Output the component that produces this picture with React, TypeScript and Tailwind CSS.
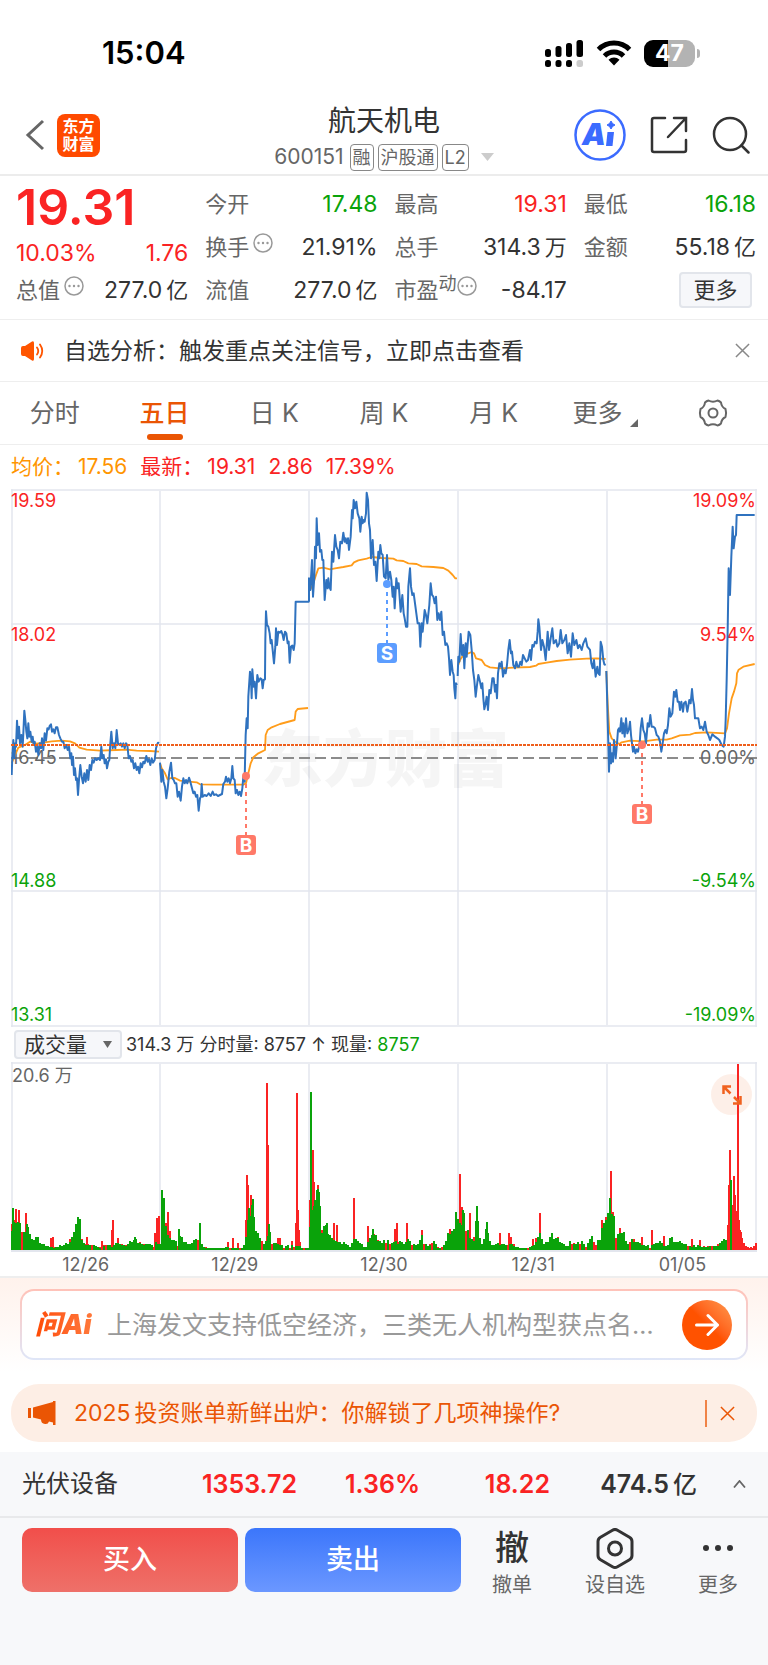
import React, { useState } from 'react';

const periods = ['分时', '五日', '日 K', '周 K', '月 K', '更多'];

// Intraday curves, one entry per trading day. Points are stored at three units per pixel,
// dx is the pixel offset of the day's origin inside the chart.
const days = [
  {
    dx: -11,
    price:
      '35,885 37,830 40,780 43,835 46,790 48,800 51,722 54,775 57,740 60,790 64,765 68,800 70,760 73,692 76,720 79,755 82,775 85,730 88,770 91,755 95,785 98,770 101,795 104,785 108,815 112,800 115,825 119,790 123,805 126,775 130,810 134,760 138,782 142,745 146,748 149,738 153,733 156,755 160,748 164,760 168,742 172,742 177,765 181,775 186,785 190,785 194,805 199,795 203,810 207,800 211,835 214,820 216,855 219,830 222,885 225,865 228,900 231,895 234,945 237,900 241,855 245,890 249,910 253,880 257,905 261,870 265,900 269,855 273,870 277,840 281,848 285,835 290,840 295,835 300,840 304,800 307,835 311,825 314,850 318,838 321,865 325,845 328,840 331,790 334,755 338,805 342,790 346,805 350,750 354,790 358,795 362,790 366,800 370,790 374,805 378,790 382,795 386,835 390,828 394,845 398,840 402,865 406,850 410,870 414,860 418,880 422,850 426,862 430,845 434,850 439,828 443,845 447,838 451,855 455,835 459,848 464,840 468,805 471,795 474,788 477,790',
    average:
      '35,850 45,825 55,803 75,795 90,785 110,791 130,788 155,784 185,782 210,784 225,790 238,803 260,809 300,812 350,810 380,809 410,812 450,813 477,815',
  },
  {
    dx: -11,
    price:
      '480,848 484,905 487,870 491,905 495,920 499,955 503,925 508,875 513,848 517,895 521,900 525,910 529,910 533,950 537,935 542,962 546,920 550,895 554,910 558,900 562,910 567,893 571,905 576,925 580,940 584,935 588,950 592,945 596,992 600,955 603,950 605,912 608,950 614,945 620,948 626,940 632,948 638,935 642,945 648,943 654,948 660,945 666,942 670,912 675,905 678,890 682,905 686,895 690,910 694,895 697,858 700,895 704,900 707,940 711,930 715,945 719,935 723,948 727,925 730,890 734,905 735,850 737,765 740,715 743,745 745,650 750,575 753,600 755,655 757,568 761,620 764,605 768,655 772,585 776,605 781,595 785,598 788,625 791,600 795,598 796,480 798,394 801,435 805,440 809,460 812,490 815,480 822,550 826,500 828,445 831,495 835,455 840,458 844,453 848,465 851,480 855,455 859,460 863,490 866,485 869,548 873,500 877,497 881,510 884,490 887,365 928,365',
    average:
      '480,850 485,865 495,880 503,898 513,894 525,894 540,902 560,904 590,907 600,913 640,914 730,914 738,910 745,880 752,850 760,832 775,820 795,810 797,765 803,750 815,742 840,732 884,720 887,695 893,687 924,684',
  },
  {
    dx: 289,
    price:
      '27,365 27,295 31,330 36,240 39,350 43,290 45,200 48,235 50,115 53,195 57,160 60,215 64,210 67,240 70,240 74,360 79,300 83,325 85,295 88,320 92,330 96,215 100,245 105,165 109,200 113,210 117,235 121,185 126,190 130,158 134,185 137,175 140,190 144,175 147,210 152,170 156,90 158,115 161,60 165,85 169,65 173,100 178,115 181,155 185,110 188,130 191,120 194,125 198,100 200,38 204,60 207,130 210,150 213,235 218,180 222,255 226,245 230,303 235,215 238,235 241,195 244,220 248,225 252,290 257,295 261,225 265,300 270,275 274,300 278,350 281,320 284,385 289,295 293,325 296,310 302,395 307,345 311,400 314,415 318,440 322,440 325,320 330,265 333,320 337,345 341,340 345,370 349,400 353,430 358,430 361,500 365,430 368,455 374,390 378,405 382,430 388,375 392,310 396,345 400,350 404,370 408,350 412,420 416,400 420,420 424,395 428,465 432,455 436,495 440,490 444,500 447,535 450,585 454,540 458,575 461,585 463,625 466,655 468,610 471,615',
    average:
      '30,330 40,310 48,285 55,265 70,263 90,268 105,265 130,261 155,256 162,247 175,241 200,236 215,231 245,234 280,236 290,241 310,243 325,250 350,252 365,259 400,261 430,264 445,272 458,285 466,295 471,295',
  },
  {
    dx: 289,
    price:
      '473,588 475,530 478,545 482,462 486,525 490,495 493,565 497,490 500,530 506,455 511,465 515,510 519,570 523,600 527,650 531,615 535,585 540,605 544,625 547,610 550,655 553,688 557,670 560,650 564,690 568,630 572,640 577,595 581,595 585,635 588,615 591,655 594,580 598,550 602,560 605,545 609,590 613,570 617,580 621,555 625,510 629,480 633,520 636,515 640,555 645,565 649,545 653,560 657,560 661,545 665,555 669,525 674,535 679,545 684,540 690,510 693,540 697,495 701,500 705,485 710,490 713,455 715,418 718,440 723,510 727,480 732,500 737,540 743,455 747,510 752,475 757,445 761,490 768,480 772,500 778,490 782,450 787,490 793,480 798,465 803,520 808,490 813,530 818,460 823,495 829,480 834,505 839,495 845,510 850,490 857,475 862,500 870,510 874,550 878,565 882,540 887,590 892,560 895,580 899,585 902,485 906,500 910,540 913,553 917,555',
    average:
      '473,560 480,540 490,525 505,520 515,516 522,520 528,535 545,540 555,555 570,562 600,565 640,563 690,561 708,557 715,552 740,548 770,543 810,539 860,536 890,535 917,537',
  },
  {
    dx: 519,
    price:
      '229,573 231,640 233,720 235,790 237,875 240,790 243,850 246,820 249,845 252,780 257,835 261,790 264,750 267,745 270,755 274,715 277,760 280,730 284,770 288,715 292,760 297,745 300,725 303,765 306,790 309,815 312,800 316,820 320,808 324,815 329,790 332,745 336,715 340,750 344,760 348,790 353,730 357,740 361,705 365,740 370,740 375,745 380,765 385,770 390,785 394,815 398,790 402,760 406,750 410,760 414,735 418,685 422,710 427,700 432,635 436,650 439,630 443,665 447,665 450,690 454,665 459,695 462,670 467,665 472,695 478,660 482,670 486,627 489,660 492,675 495,715 500,715 505,715 510,745 515,740 520,750 525,725 530,755 535,765 540,780 547,763 555,770 562,775 568,780 575,795 581,800 585,770 587,720 590,600 593,450 596,265 600,345 604,230 608,140 611,205 615,170 618,165 620,105 674,105',
    average:
      '229,573 233,670 238,755 245,775 255,785 268,792 275,787 300,782 340,784 380,779 410,779 425,775 450,766 480,764 495,759 530,757 585,760 591,745 597,700 605,655 612,635 619,610 621,580 626,569 640,560 674,552',
  },
];

const trades = [
  { side: 'B', x: 235, y: 287, color: '#ff7968' },
  { side: 'S', x: 376, y: 95, color: '#5c9dff' },
  { side: 'B', x: 631, y: 256, color: '#ff7968' },
];

const priceLabels = [
  { y: 18, price: '19.59', change: '19.09%', color: '#fa2323' },
  { y: 152, price: '18.02', change: '9.54%', color: '#fa2323' },
  { y: 275, price: '16.45', change: '0.00%', color: '#666666' },
  { y: 398, price: '14.88', change: '-9.54%', color: '#0aa30a' },
  { y: 532, price: '13.31', change: '-19.09%', color: '#0aa30a' },
];

// [x, height] outline of the volume bars
const volumeOutline = [
  [0, 20], [2, 42], [8, 32], [14, 18], [17, 24], [22, 12], [26, 18], [31, 7], [44, 3], [56, 8], [61, 15], [67, 33], [70, 24],
  [72, 8], [77, 7], [89, 4], [93, 6], [101, 5], [106, 8], [114, 6], [119, 9], [124, 13], [129, 11], [136, 5], [142, 9],
  [149, 9], [151, 50], [154, 45], [156, 25], [161, 15], [166, 8], [168, 21], [172, 11], [177, 8], [182, 8], [186, 16],
  [189, 27], [191, 7], [195, 3], [206, 2], [216, 3], [232, 2], [236, 20], [238, 42], [242, 51], [245, 20], [248, 16], [251, 10],
  [255, 10], [258, 26], [261, 13], [266, 8], [273, 4], [278, 6], [282, 7], [288, 7], [291, 2], [298, 3], [300, 60], [302, 55],
  [304, 45], [307, 62], [309, 50], [311, 25], [316, 27], [320, 13], [327, 10], [333, 8], [340, 4], [344, 18], [350, 7],
  [355, 4], [362, 20], [366, 14], [371, 8], [375, 14], [380, 7], [385, 10], [391, 8], [399, 13], [406, 5], [411, 17],
  [416, 4], [422, 11], [427, 3], [432, 4], [434, 12], [439, 24], [443, 22], [445, 38], [448, 28], [452, 40], [456, 28],
  [460, 14], [464, 16], [466, 44], [468, 18], [471, 10], [476, 28], [478, 11], [481, 6], [489, 7], [495, 6], [501, 9],
  [506, 3], [515, 2], [522, 6], [529, 19], [534, 8], [541, 17], [546, 17], [550, 8], [556, 5], [559, 10], [565, 7], [571, 11],
  [576, 6], [582, 17], [587, 12], [594, 30], [598, 52], [602, 36], [606, 26], [610, 18], [613, 19], [617, 8], [623, 13],
  [629, 8], [640, 4], [648, 10], [655, 4], [660, 14], [665, 9], [672, 10], [678, 4], [685, 5], [692, 4], [704, 5], [709, 8],
  [713, 15], [716, 10], [719, 70], [722, 34], [725, 27], [728, 24], [730, 3], [746, 2],
];

// Single minutes whose buying volume stands out
const buySpikes = [
  [5, 41], [8, 40], [15, 37], [40, 12], [42, 13], [76, 13], [91, 9], [101, 20], [102, 30], [107, 12], [144, 17], [146, 32],
  [148, 34], [157, 38], [159, 19], [217, 8], [222, 12], [227, 7], [235, 30], [236, 75], [237, 65], [240, 55],
  [243, 30], [256, 167], [257, 105], [267, 12], [269, 12], [281, 9], [285, 27], [286, 157], [287, 40], [288, 20], [289, 8],
  [299, 50], [302, 100], [303, 68], [307, 65], [323, 27], [326, 25], [343, 52], [357, 24], [384, 21], [386, 27], [396, 27],
  [411, 20], [450, 30], [449, 76], [451, 43], [459, 37], [489, 17], [498, 17], [500, 13], [522, 11], [525, 12], [528, 12],
  [529, 37], [591, 30], [595, 33], [600, 79], [602, 38], [609, 22], [631, 13], [641, 20], [653, 14], [681, 11],
  [689, 10], [717, 20], [718, 65], [719, 100], [721, 45], [723, 74], [724, 55], [726, 39], [727, 186], [728, 30], [729, 20],
  [730, 18], [731, 12], [733, 7], [735, 4], [737, 3], [740, 3], [743, 4], [745, 7],
];

const sellSpikes = [
  [2, 42], [16, 26], [67, 33], [69, 31], [124, 13], [151, 60], [153, 52], [168, 21], [189, 27], [238, 42], [242, 51],
  [258, 26], [300, 158], [304, 50], [306, 60], [308, 58], [316, 27], [362, 21], [445, 38], [452, 40], [466, 44], [476, 28],
  [599, 52], [603, 34], [720, 70],
];

const VOLUME_BASE = 188;

function outlineAt(x: number) {
  const next = volumeOutline.findIndex((p) => p[0] > x);
  if (next < 1) return volumeOutline[next === 0 ? 0 : volumeOutline.length - 1][1];
  const [x0, h0] = volumeOutline[next - 1];
  const [x1, h1] = volumeOutline[next];
  return h0 + ((h1 - h0) * (x - x0)) / (x1 - x0);
}

function toBars(bars: number[][]) {
  return bars.map(([x, h]) => `M${x} ${VOLUME_BASE}v${-h}`).join('');
}

function buildVolumePaths() {
  let seed = 7;
  const random = () => {
    seed = (seed * 16807) % 2147483647;
    return seed / 2147483647;
  };
  const up: number[][] = [];
  const down: number[][] = [];
  for (let x = 1; x < 746; x += 2) {
    const height = outlineAt(x);
    const low = Math.max(2, Math.round(height * (0.6 + 0.4 * random())));
    const high = Math.max(2, Math.round(height * (0.3 + 0.6 * random())));
    up.push([x, high]);
    if (random() > 0.08 && x < 716) down.push([x, low]);
  }
  return { up: toBars(up), down: toBars(down) };
}

const volume = buildVolumePaths();

const InfoDots = () => (
  <svg className="w-5 h-5 shrink-0 mb-2" viewBox="0 0 20 20" fill="none" stroke="#999" strokeWidth="1.5" aria-hidden="true">
    <circle cx="10" cy="10" r="9" />
    <path d="M5.5 10h.01M10 10h.01M14.5 10h.01" strokeWidth="2.4" strokeLinecap="round" />
  </svg>
);

const CloseIcon = ({ className }: { className: string }) => (
  <svg className={className} viewBox="0 0 16 16" fill="none" stroke="currentColor" strokeWidth="1.6" aria-hidden="true">
    <path d="M1 1l14 14M15 1L1 15" />
  </svg>
);

interface QuoteItemProps {
  label: string;
  value: string;
  unit?: string;
  tone?: string;
  info?: boolean;
  sup?: string;
}

const QuoteItem: React.FC<QuoteItemProps> = ({ label, value, unit, tone = 'text-[#333]', info, sup }) => (
  <div className="h-[43px] flex items-center justify-between whitespace-nowrap">
    <dt className="flex items-center text-[#666]">
      {label}
      {sup && <span className="text-[18px] leading-5 mb-3">{sup}</span>}
      {info && <span className={sup ? '' : 'ml-1'}><InfoDots /></span>}
    </dt>
    <dd className={`text-[23px] ${tone}`}>
      {value}
      {unit && <span className="ml-1 text-[22px]">{unit}</span>}
    </dd>
  </div>
);

const StatusBar = () => (
  <div className="h-24 pt-[10px] pl-[102px] pr-[68px] flex items-center justify-between text-black">
    <span className="text-[31px] leading-9 font-semibold">15:04</span>
    <div className="flex items-center gap-3">
      <svg className="w-10 h-7" viewBox="0 0 40 28" aria-hidden="true">
        <g fill="#000">
          <rect x="1" y="10" width="6" height="8" rx="2.5" />
          <rect x="11.500" y="7" width="6" height="11" rx="2.500" />
          <rect x="22" y="4" width="6" height="14" rx="2.500" />
          <rect x="32.500" y="1" width="6.500" height="17" rx="2.500" />
          <rect x="1" y="21" width="6" height="7" rx="2.500" />
          <rect x="11.500" y="21" width="6" height="7" rx="2.500" />
          <rect x="22" y="21" width="6" height="7" rx="2.500" />
        </g>
        <rect x="32.500" y="21" width="6.500" height="7" rx="2.500" fill="#ccc" />
      </svg>
      <svg className="w-9 h-[26px]" viewBox="0 0 36 26" fill="none" stroke="#000" strokeWidth="5" aria-hidden="true">
        <path d="M2.500 9.500a22 22 0 0 1 31 0" />
        <path d="M8.500 16a13.500 13.500 0 0 1 19 0" />
        <path d="M18 25.500l-5.500-5.800a8 8 0 0 1 11 0z" fill="#000" stroke="none" />
      </svg>
      <div className="flex items-center gap-[2px]">
        <div className="w-[51px] h-[27px] rounded-[9px] bg-[linear-gradient(90deg,#000_47%,#b3b3b3_47%)] text-white text-[23px] leading-[27px] font-bold text-center">
          47
        </div>
        <div className="w-[3px] h-[9px] rounded-r-full bg-[#b3b3b3]" />
      </div>
    </div>
  </div>
);

const Header = () => (
  <header className="h-20 px-[18px] grid grid-cols-[1fr_auto_1fr] items-center border-b-2 border-[#ececec]">
    <div className="pl-[7px] flex items-center gap-3">
      <button type="button" aria-label="返回">
        <svg className="w-5 h-8" viewBox="0 0 20 32" fill="none" stroke="#666" strokeWidth="3" aria-hidden="true">
          <path d="M18 2L3 16l15 14" />
        </svg>
      </button>
      <div className="w-[43px] h-[43px] rounded-lg bg-[#ff4a00] text-white text-base leading-[18px] font-bold flex items-center justify-center text-center">
        <span>东方<br />财富</span>
      </div>
    </div>
    <div className="pt-1 flex flex-col items-center">
      <h1 className="text-[28px] leading-9 text-[#333]">航天机电</h1>
      <div className="mt-1 flex items-center gap-1 text-[#666]">
        <span className="text-[21px] leading-7 mr-[2px]">600151</span>
        <span className="h-[27px] px-[2px] border border-[#888] rounded text-[18px] leading-[25px]">融</span>
        <span className="h-[27px] px-[2px] border border-[#888] rounded text-[18px] leading-[25px]">沪股通</span>
        <span className="h-[27px] px-[2px] border border-[#888] rounded text-[18px] leading-[25px]">L2</span>
        <svg className="w-[13px] h-2 ml-2" viewBox="0 0 13 8" fill="#ccc" aria-hidden="true">
          <path d="M0 0h13L6.500 8z" />
        </svg>
      </div>
    </div>
    <div className="flex items-center justify-end gap-6">
      <button type="button" aria-label="Ai">
        <svg className="w-[52px] h-[52px]" viewBox="0 0 52 52" fill="#3b6bff" aria-hidden="true">
          <circle cx="26" cy="26" r="24.500" fill="#fff" stroke="#3b6bff" strokeWidth="2.500" />
          <text x="8" y="36" fontSize="30" fontWeight="900" fontStyle="italic">A</text>
          <path d="M33.500 23h6.500l-1.500 14H32z" />
          <path d="M37 12l1.500 2.500L41 16l-2.500 1.500L37 20l-1.500-2.500L33 16l2.500-1.500z" strokeWidth="1" stroke="#3b6bff" />
        </svg>
      </button>
      <button type="button" aria-label="分享">
        <svg className="w-[38px] h-[38px]" viewBox="0 0 38 38" fill="none" stroke="#333" strokeWidth="2.500" strokeLinecap="round" aria-hidden="true">
          <path d="M15 2H4a2 2 0 0 0-2 2v30a2 2 0 0 0 2 2h30a2 2 0 0 0 2-2V24" />
          <path d="M24 2h12v13M36 2L18 21" />
        </svg>
      </button>
      <button type="button" aria-label="搜索">
        <svg className="w-[38px] h-[38px]" viewBox="0 0 38 38" fill="none" stroke="#333" strokeWidth="2.500" strokeLinecap="round" aria-hidden="true">
          <circle cx="18" cy="18" r="16" />
          <path d="M29.500 29.500l7 7" />
        </svg>
      </button>
    </div>
  </header>
);

const QuotePanel = () => (
  <section className="pt-[6px] pb-2 pl-4 pr-3 grid grid-cols-4 gap-x-[17px] text-[22px] leading-8 border-b border-[#eee]">
    <dl>
      <div className="h-[86px] text-[#fa2323]">
        <div className="text-[50px] leading-[50px] font-semibold">19.31</div>
        <div className="flex justify-between pt-[5px] text-[23px]">
          <span>10.03%</span>
          <span>1.76</span>
        </div>
      </div>
      <QuoteItem label="总值" value="277.0" unit="亿" info />
    </dl>
    <dl>
      <QuoteItem label="今开" value="17.48" tone="text-[#0aa30a]" />
      <QuoteItem label="换手" value="21.91%" info />
      <QuoteItem label="流值" value="277.0" unit="亿" />
    </dl>
    <dl>
      <QuoteItem label="最高" value="19.31" tone="text-[#fa2323]" />
      <QuoteItem label="总手" value="314.3" unit="万" />
      <QuoteItem label="市盈" value="-84.17" sup="动" info />
    </dl>
    <dl>
      <QuoteItem label="最低" value="16.18" tone="text-[#0aa30a]" />
      <QuoteItem label="金额" value="55.18" unit="亿" />
      <div className="h-[43px] pr-1 flex items-center justify-end">
        <button type="button" className="w-[73px] h-9 bg-[#f6f7fa] border-2 border-[#e2e5eb] rounded text-[#333] leading-7">更多</button>
      </div>
    </dl>
  </section>
);

const SignalNotice = () => (
  <div className="h-[62px] pl-5 pr-[18px] flex items-center border-b border-[#eee]">
    <svg className="w-6 h-6" viewBox="0 0 24 24" fill="none" stroke="#ff5500" strokeWidth="1.800" strokeLinecap="round" aria-hidden="true">
      <path d="M1 9q0-2 2-2h2l7-4.500Q14 1.500 14 4v16q0 2.500-2 1.500L5 17H3q-2 0-2-2z" fill="#ff5500" stroke="none" />
      <path d="M17 8.500q2.500 3.500 0 7M20 5.500q4.500 6.500 0 13" />
    </svg>
    <p className="ml-5 flex-1 text-[23px] leading-8 text-[#333]">自选分析：触发重点关注信号，立即点击查看</p>
    <button type="button" aria-label="关闭" className="text-[#888]">
      <CloseIcon className="w-[15px] h-[15px]" />
    </button>
  </div>
);

const PriceChart = () => (
  <svg className="block w-full" viewBox="0 0 746 538" role="img" aria-label="五日分时走势">
    <g stroke="#e3e6ee" strokeWidth="1.500" fill="none">
      <path d="M0 1h746M0 135h746M0 402h746M149 2v534M298 2v534M447 2v534M596 2v534" />
      <path d="M1 0v538M745 0v538M0 537h746" />
    </g>
    <text x="250" y="293" fontSize="62" fontWeight="900" fill="#000" opacity="0.035">东方财富</text>
    <path d="M0 269h746" stroke="#8c8c8c" strokeWidth="2" strokeDasharray="11 5" />
    <g fontSize="18">
      {priceLabels.map((row) => (
        <g key={row.price} fill={row.color}>
          <text x="0" y={row.y}>{row.price}</text>
          <text x="745" y={row.y} textAnchor="end">{row.change}</text>
        </g>
      ))}
    </g>
    {days.map((day, i) => (
      <g key={i} transform={`translate(${day.dx} -9) scale(0.33333)`} fill="none" strokeLinejoin="round">
        <polyline points={day.average} stroke="#ff9c1a" strokeWidth="5.500" />
        <polyline points={day.price} stroke="#2f72bf" strokeWidth="6" />
      </g>
    ))}
    <path d="M0 256h746" stroke="#ee5f1c" strokeWidth="2" strokeDasharray="3 1" />
    {trades.map((t) => (
      <g key={t.x}>
        <path d={`M${t.x} ${t.y}v59`} stroke={t.color} strokeWidth="2" strokeDasharray="4 4" />
        <circle cx={t.x} cy={t.y} r="4" fill={t.color} />
        <rect x={t.x - 10} y={t.y + 59} width="20" height="20" rx="3" fill={t.color} />
        <text x={t.x} y={t.y + 76} fontSize="19" fontWeight="700" fill="#fff" textAnchor="middle">{t.side}</text>
      </g>
    ))}
  </svg>
);

const VolumeChart = () => (
  <div className="relative">
    <svg className="block w-full" viewBox="0 0 746 190" role="img" aria-label="成交量">
      <path d="M0 1h746M1 0v188M745 0v188M149 2v186M298 2v186M447 2v186M596 2v186" stroke="#e3e6ee" strokeWidth="1.500" />
      <text x="1" y="20" fontSize="18" fill="#666">20.6 万</text>
      <g fill="none">
        <path d={volume.up} stroke="#fa2323" strokeWidth="2" />
        <path d={toBars(buySpikes)} stroke="#fa2323" strokeWidth="2" />
        <path d={volume.down} stroke="#0aa30a" strokeWidth="2" />
        <path d={toBars(sellSpikes)} stroke="#0aa30a" strokeWidth="2" />
      </g>
      <path d="M0 189h746" stroke="#e3e6ee" strokeWidth="2" />
    </svg>
    <button type="button" aria-label="全屏" className="absolute right-[5px] top-3 w-[41px] h-[41px] rounded-full bg-[#f0621f]/10 flex items-center justify-center">
      <svg className="w-5 h-5" viewBox="0 0 20 20" fill="none" stroke="#f0621f" strokeWidth="2.500" aria-hidden="true">
        <path d="M1.500 9V1.500H9M2 2l6.500 6.500M18.500 11v7.500H11M18 18l-6-6" />
      </svg>
    </button>
  </div>
);

const AskBar = () => (
  <div className="pt-[11px] pb-3 px-5 bg-gradient-to-b from-[#fff2ec] to-white border-t-2 border-[#eee]">
    <form className="p-[2px] rounded-[14px] bg-gradient-to-b from-[#ffc2b8] to-[#dfe6f8]" onSubmit={(e) => e.preventDefault()}>
      <div className="h-[67px] pl-[13px] pr-[14px] flex items-center rounded-xl bg-white">
        <label htmlFor="ask" className="w-[60px] pr-1 text-[27px] leading-8 font-black italic text-transparent bg-clip-text bg-gradient-to-r from-[#ff4a00] to-[#ff7a3c] whitespace-nowrap">
          问Ai
        </label>
        <input
          id="ask"
          type="text"
          placeholder="上海发文支持低空经济，三类无人机构型获点名…"
          className="ml-3 mr-4 flex-1 min-w-0 text-[25px] leading-9 placeholder-[#999] text-ellipsis focus:outline-none"
        />
        <button type="submit" aria-label="提问" className="w-[50px] h-[50px] rounded-full bg-gradient-to-tr from-[#ff5200] from-50% to-[#ff9a4d] flex items-center justify-center">
          <svg className="w-6 h-6" viewBox="0 0 24 24" fill="none" stroke="#fff" strokeWidth="3" strokeLinecap="round" strokeLinejoin="round" aria-hidden="true">
            <path d="M1.500 12h21M13 2.500l9.500 9.500-9.500 9.500" />
          </svg>
        </button>
      </div>
    </form>
  </div>
);

const BillBanner = () => (
  <div className="mt-3 mx-[11px] h-[58px] pl-[17px] pr-[22px] flex items-center rounded-[28px] bg-[#fdeee5] text-[#ea5504]">
    <svg className="w-7 h-6" viewBox="0 0 28 24" fill="currentColor" aria-hidden="true">
      <path d="M0 7h3v10H0zM5 6.500L25 1V0h2.500v24H25v-2.500l-4-1q-1 3-4 2.500-4-.5-4-4.500l-8-2z" />
    </svg>
    <p className="ml-[18px] flex-1 text-[23px] leading-8">
      <span className="mr-1">2025</span>投资账单新鲜出炉：你解锁了几项神操作?
    </p>
    <span className="w-[2px] h-[27px] mr-[13px] bg-current opacity-70" />
    <button type="button" aria-label="关闭">
      <CloseIcon className="w-[15px] h-[15px]" />
    </button>
  </div>
);

const SectorRow = () => (
  <div className="h-[66px] px-[22px] flex items-center text-2xl leading-8 text-[#333] border-b-2 border-[#e8e9eb]">
    <span className="w-[146px]">光伏设备</span>
    <span className="w-[129px] text-right text-[25px] font-semibold text-[#fa2323]">1353.72</span>
    <span className="w-[123px] text-right text-[25px] font-semibold text-[#fa2323]">1.36%</span>
    <span className="w-[130px] text-right text-[25px] font-semibold text-[#fa2323]">18.22</span>
    <span className="flex-1 text-right text-[25px] font-semibold">
      474.5<span className="ml-1 text-2xl font-medium">亿</span>
    </span>
    <button type="button" aria-label="展开" className="ml-9">
      <svg className="w-[13px] h-2" viewBox="0 0 13 8" fill="none" stroke="#666" strokeWidth="1.800" aria-hidden="true">
        <path d="M1 7.500L6.500 1 12 7.500" />
      </svg>
    </button>
  </div>
);

const ActionBar = () => (
  <div className="pt-[10px] px-[22px] flex gap-[7px] text-[#333]">
    <button type="button" className="w-[216px] h-16 rounded-[10px] bg-gradient-to-b from-[#f14e4a] to-[#ee7069] text-white text-[27px] font-medium">买入</button>
    <button type="button" className="w-[216px] h-16 rounded-[10px] bg-gradient-to-b from-[#3b76fb] to-[#6b97ff] text-white text-[27px] font-medium">卖出</button>
    <div className="flex-1 flex justify-between text-xl leading-7">
      <button type="button" className="w-[88px] flex flex-col items-center">
        <span className="h-[43px] text-[34px] leading-10 font-medium" aria-hidden="true">撤</span>
        <span className="text-[#666]">撤单</span>
      </button>
      <button type="button" className="w-24 flex flex-col items-center">
        <svg className="w-[38px] h-[43px]" viewBox="0 0 38 43" fill="none" stroke="#333" strokeWidth="3" strokeLinejoin="round" aria-hidden="true">
          <path d="M16.500 2.200a5 5 0 0 1 5 0l12 7a5 5 0 0 1 2.500 4.300v14a5 5 0 0 1-2.500 4.300l-12 7a5 5 0 0 1-5 0l-12-7A5 5 0 0 1 2 27.500v-14a5 5 0 0 1 2.500-4.300z" />
          <circle cx="19" cy="20.500" r="6.500" />
        </svg>
        <span className="text-[#666]">设自选</span>
      </button>
      <button type="button" className="w-[88px] -mr-4 flex flex-col items-center">
        <svg className="w-8 h-[43px]" viewBox="0 0 32 43" fill="#333" aria-hidden="true">
          <circle cx="4" cy="20" r="3" />
          <circle cx="16" cy="20" r="3" />
          <circle cx="28" cy="20" r="3" />
        </svg>
        <span className="text-[#666]">更多</span>
      </button>
    </div>
  </div>
);

export default function App() {
  const [period, setPeriod] = useState('五日');

  return (
    <div className="min-h-screen flex flex-col bg-white font-['Inter','Noto_Sans_CJK_SC',sans-serif]">
      <StatusBar />
      <Header />
      <QuotePanel />
      <SignalNotice />

      <nav className="h-[63px] grid grid-cols-7 border-b border-[#eee] text-[25px] leading-8">
        {periods.map((name) => (
          <button
            key={name}
            type="button"
            onClick={() => setPeriod(name)}
            className={`relative flex items-center justify-center ${period === name ? 'text-[#ea5504] font-medium' : 'text-[#666]'}`}
          >
            {name}
            {name === '更多' && (
              <svg className="w-2 h-2 ml-2 -mr-1 mt-5" viewBox="0 0 8 8" fill="#666" aria-hidden="true">
                <path d="M8 0v8H0z" />
              </svg>
            )}
            {period === name && <span className="absolute bottom-1 w-9 h-[6px] rounded-full bg-[#ea5504]" />}
          </button>
        ))}
        <button type="button" aria-label="设置" className="flex items-center justify-center">
          <svg className="w-[30px] h-[30px]" viewBox="0 0 30 30" fill="none" stroke="#666" strokeWidth="2" strokeLinejoin="round" aria-hidden="true">
            <path d="M10.500 2.500q4.500 2.500 9 0 2 .5 3.500 2 .5 4.500 4.500 6.500 1.200 4 0 8-4 2-4.500 6.500-1.500 1.500-3.500 2-4.500-2.500-9 0-2-.5-3.500-2Q6.500 21 2.500 19q-1.200-4 0-8Q6.500 9 7 4.500q1.500-1.500 3.500-2z" />
            <circle cx="15" cy="15" r="4.500" />
          </svg>
        </button>
      </nav>

      <section className="px-[11px]">
        <div className="h-[44px] flex items-center gap-x-[13px] text-[21px] leading-7 text-[#fa2323] whitespace-nowrap">
          <span className="flex gap-x-1 text-[#ff9500]"><span>均价：</span>17.56</span>
          <span className="flex gap-x-1"><span>最新：</span>19.31</span>
          <span>2.86</span>
          <span>17.39%</span>
        </div>
        <PriceChart />
        <div className="h-[35px] pl-[3px] flex items-center text-[18px] leading-7 text-[#333] whitespace-nowrap">
          <div className="relative">
            <select aria-label="指标" className="block appearance-none w-[108px] h-[29px] pl-2 bg-[#f6f7fa] border-2 border-[#e2e5eb] rounded text-[21px] leading-6">
              <option>成交量</option>
              <option>MACD</option>
            </select>
            <svg className="absolute right-[10px] top-[11px] w-[9px] h-[7px] pointer-events-none" viewBox="0 0 9 7" fill="#666" aria-hidden="true">
              <path d="M0 0h9L4.500 7z" />
            </svg>
          </div>
          <span className="ml-1">314.3 万 分时量: 8757 ↑ 现量: <span className="text-[#0aa30a]">8757</span></span>
        </div>
        <VolumeChart />
        <div className="h-6 grid grid-cols-5 text-center text-[18px] leading-[26px] text-[#666]">
          {['12/26', '12/29', '12/30', '12/31', '01/05'].map((date) => (
            <span key={date}>{date}</span>
          ))}
        </div>
      </section>

      <AskBar />
      <BillBanner />

      <footer className="mt-[10px] flex-1 bg-[#f7f8fa]">
        <SectorRow />
        <ActionBar />
      </footer>
    </div>
  );
}
